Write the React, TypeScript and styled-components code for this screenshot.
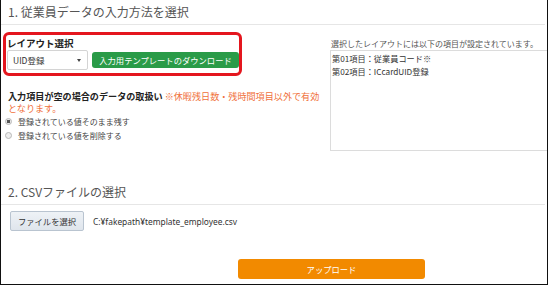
import React from 'react'
import styled, { createGlobalStyle } from 'styled-components'

const GlobalStyle = createGlobalStyle`
  html, body {
    margin: 0;
    padding: 0;
    background: #fff;
  }
  body {
    font-family: "Noto Sans CJK JP", "Noto Sans", sans-serif;
    color: #333;
  }
`

const Frame = styled.div`
  box-sizing: border-box;
  width: 548px;
  height: 285px;
  border: 1px solid #111;
  border-top: none;
  display: flex;
  flex-direction: column;
`

const SectionTitle = styled.h2<{ $gap?: number }>`
  margin: ${({ $gap }) => $gap ?? 0}px 2px 0 0;
  padding: 0 0 0 7px;
  height: 24px;
  line-height: 24px;
  font-size: 12px;
  font-weight: normal;
  color: #555;
  border-bottom: 1px solid #e6e6e6;
`

const Row = styled.div`
  display: flex;
`

const LeftColumn = styled.div`
  width: 327px;
  display: flex;
  flex-direction: column;
`

const RightColumn = styled.div`
  flex: 1;
  display: flex;
  flex-direction: column;
  padding-top: 13px;
  margin-left: 2px;
`

const Highlight = styled.div`
  box-sizing: border-box;
  margin: 7px 0 0 2px;
  width: 239px;
  height: 44px;
  border: 3px solid #e4161e;
  border-radius: 6px;
  padding: 1px 0 0 1px;
`

const FieldLabel = styled.div`
  height: 14px;
  line-height: 14px;
  font-size: 9.5px;
  font-weight: bold;
  color: #222;
`

const SelectRow = styled.div`
  display: flex;
  align-items: center;
  gap: 4px;
`

const SelectBox = styled.div`
  box-sizing: border-box;
  width: 81px;
  height: 20px;
  border: 1px solid #d4d4d4;
  border-radius: 2px;
  background: #fff;
  display: flex;
  align-items: center;
  justify-content: space-between;
  padding: 0 6px 0 5px;
  font-size: 8.5px;
  color: #333;
`

const Caret = styled.span`
  width: 0;
  height: 0;
  border-left: 2.5px solid transparent;
  border-right: 2.5px solid transparent;
  border-top: 3px solid #444;
`

const ActionButton = styled.button<{ $tone: 'green' | 'orange'; $width: number }>`
  box-sizing: border-box;
  width: ${({ $width }) => $width}px;
  height: ${({ $tone }) => ($tone === 'green' ? 16 : 20)}px;
  border: none;
  border-radius: 3px;
  background: ${({ $tone }) => ($tone === 'green' ? '#2a9b48' : '#f28a00')};
  color: #fff;
  font-family: inherit;
  font-size: 8.3px;
  padding: 0;
  line-height: 1;
`

const EmptyRule = styled.div`
  margin: 14px 0 0 7px;
  font-size: 9.1px;
  line-height: 12px;
  color: #222;
  width: 318px;
`

const Strong = styled.span`
  font-weight: bold;
`

const Note = styled.span`
  color: #f0703a;
`

const RadioList = styled.div`
  display: flex;
  flex-direction: column;
`

const RadioItem = styled.label`
  display: flex;
  align-items: center;
  height: 14px;
  font-size: 8px;
  color: #444;
  gap: 6px;
  padding-left: 4px;
`

const RadioDot = styled.span<{ $checked?: boolean }>`
  box-sizing: border-box;
  width: 7px;
  height: 7px;
  border-radius: 50%;
  border: 1px solid #b8b8b8;
  background: ${({ $checked }) =>
    $checked ? 'radial-gradient(circle, #555 0 1.5px, #e8e8e8 2px)' : '#eee'};
`

const LayoutInfo = styled.div`
  height: 12px;
  line-height: 12px;
  font-size: 8px;
  color: #555;
  padding-left: 1px;
`

const FieldList = styled.div`
  box-sizing: border-box;
  height: 101px;
  border: 1px solid #dcdcdc;
  border-right: none;
  padding: 1px 0 0 1px;
  font-size: 8.2px;
  line-height: 13px;
  color: #333;
`

const FileRow = styled.div`
  display: flex;
  align-items: center;
  margin: 6px 0 0 9px;
  gap: 9px;
`

const FileButton = styled.button`
  box-sizing: border-box;
  width: 74px;
  height: 20px;
  border: 1px solid #b9c4d0;
  border-radius: 2px;
  background: linear-gradient(#eef2f6, #dfe5ec);
  font-family: inherit;
  font-size: 8.3px;
  color: #333;
  padding: 0;
`

const FilePath = styled.span`
  font-family: "Noto Sans", "Noto Sans CJK JP", sans-serif;
  font-size: 8.4px;
  color: #333;
`

const Footer = styled.div`
  display: flex;
  padding: 28px 0 0 237px;
`

export default function App() {
  return (
    <>
      <GlobalStyle />
      <Frame>
        <SectionTitle>1. 従業員データの入力方法を選択</SectionTitle>
        <Row>
          <LeftColumn>
            <Highlight>
              <FieldLabel>レイアウト選択</FieldLabel>
              <SelectRow>
                <SelectBox>
                  <span>UID登録</span>
                  <Caret />
                </SelectBox>
                <ActionButton $tone="green" $width={147}>
                  入力用テンプレートのダウンロード
                </ActionButton>
              </SelectRow>
            </Highlight>
            <EmptyRule>
              <Strong>入力項目が空の場合のデータの取扱い</Strong>{' '}
              <Note>※休暇残日数・残時間項目以外で有効となります。</Note>
            </EmptyRule>
            <RadioList>
              <RadioItem>
                <RadioDot $checked />
                登録されている値そのまま残す
              </RadioItem>
              <RadioItem>
                <RadioDot />
                登録されている値を削除する
              </RadioItem>
            </RadioList>
          </LeftColumn>
          <RightColumn>
            <LayoutInfo>選択したレイアウトには以下の項目が設定されています。</LayoutInfo>
            <FieldList>
              第01項目：従業員コード※
              <br />
              第02項目：ICcardUID登録
            </FieldList>
          </RightColumn>
        </Row>
        <SectionTitle $gap={29}>2. CSVファイルの選択</SectionTitle>
        <FileRow>
          <FileButton>ファイルを選択</FileButton>
          <FilePath>C:¥fakepath¥template_employee.csv</FilePath>
        </FileRow>
        <Footer>
          <ActionButton $tone="orange" $width={187}>
            アップロード
          </ActionButton>
        </Footer>
      </Frame>
    </>
  )
}
